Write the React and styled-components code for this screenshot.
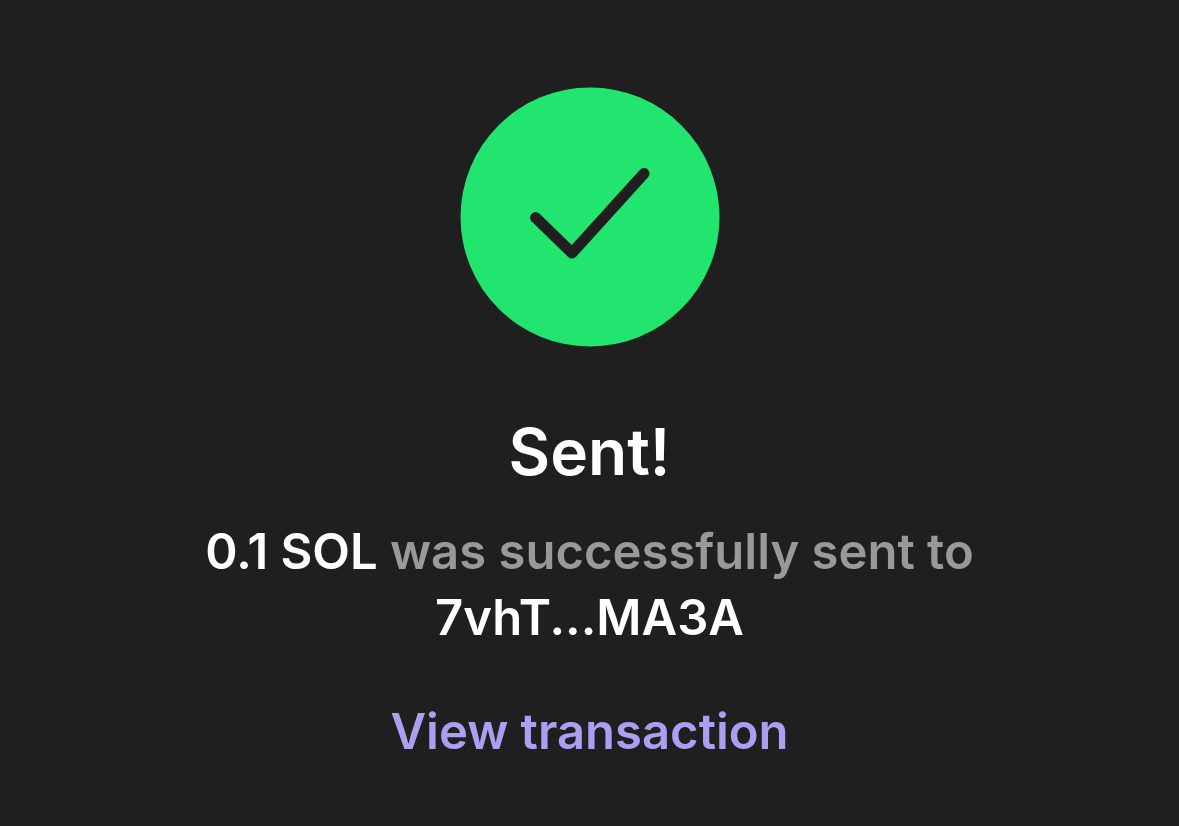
import React from 'react'
import styled, { createGlobalStyle } from 'styled-components'

const colors = {
  background: '#1f1f1f',
  success: '#21e56f',
  text: '#ffffff',
  muted: '#999999',
  link: '#ab9ff2',
}

const GlobalStyle = createGlobalStyle`
  body {
    margin: 0;
    background: ${colors.background};
    font-family: Inter, 'Liberation Sans', sans-serif;
  }
`

const Container = styled.main`
  display: flex;
  flex-direction: column;
  align-items: center;
  padding: 87px 16px 48px;
  text-align: center;
`

const SuccessIcon = styled.svg`
  width: 260px;
  height: 260px;
  margin-bottom: 65px;
`

const Title = styled.h1`
  margin: 0 0 27px;
  color: ${colors.text};
  font-size: 64px;
  font-weight: 600;
  line-height: 80px;
`

const Message = styled.p`
  max-width: 860px;
  margin: 0 0 48px;
  color: ${colors.muted};
  font-size: 49px;
  font-weight: 600;
  line-height: 66px;
`

const Highlight = styled.span`
  color: ${colors.text};
`

const TransactionLink = styled.a`
  color: ${colors.link};
  font-size: 49px;
  font-weight: 600;
  line-height: 66px;
  text-decoration: none;
`

function App() {
  return (
    <>
      <GlobalStyle />
      <Container>
        <SuccessIcon viewBox="0 0 260 260" aria-hidden="true">
          <circle cx="130" cy="130" r="129.5" fill={colors.success} />
          <path
            d="M75.5 130.5L112 166L184 86.5"
            fill="none"
            stroke={colors.background}
            strokeWidth="11"
            strokeLinecap="round"
            strokeLinejoin="round"
          />
        </SuccessIcon>
        <Title>Sent!</Title>
        <Message>
          <Highlight>0.1 SOL</Highlight> was successfully sent to <Highlight>7vhT...MA3A</Highlight>
        </Message>
        <TransactionLink href="#transaction">View transaction</TransactionLink>
      </Container>
    </>
  )
}

export default App
